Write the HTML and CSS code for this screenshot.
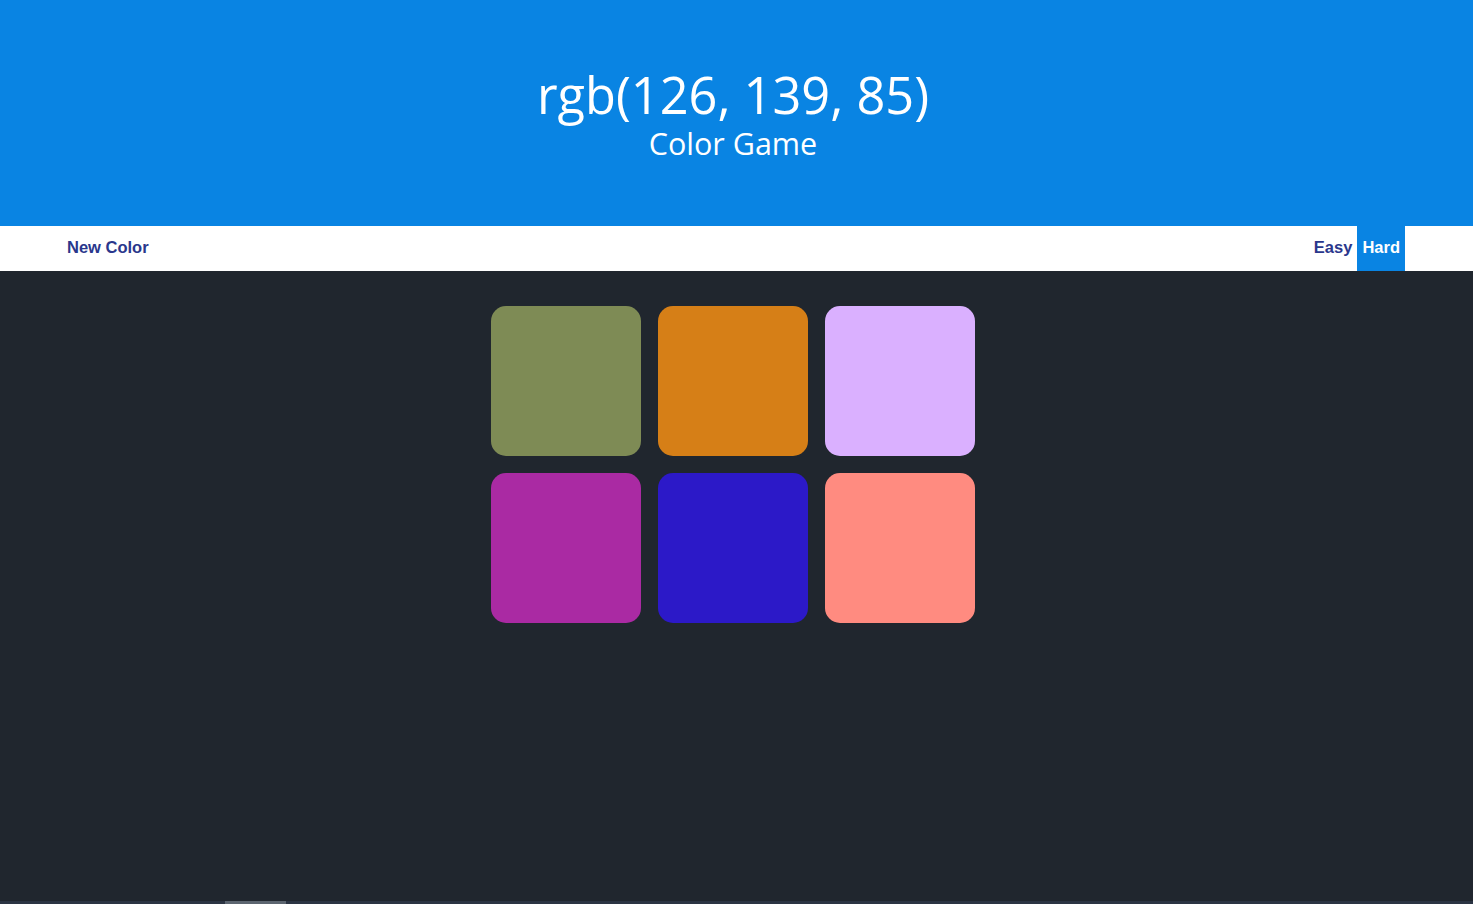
FILE: index.html
```html
<!DOCTYPE html>
<html lang="en">
<head>
<meta charset="utf-8">
<title>Color Game</title>
<link rel="stylesheet" href="styles.css">
</head>
<body>
<div class="page">
  <header class="hero">
    <h1 class="rgb">rgb(126, 139, 85)</h1>
    <p class="subtitle">Color Game</p>
  </header>
  <nav class="bar">
    <button class="btn">New Color</button>
    <div class="modes">
      <button class="btn">Easy</button>
      <button class="btn active">Hard</button>
    </div>
  </nav>
  <main class="board">
    <div class="grid">
      <div class="sq" style="background:#7e8b55"></div>
      <div class="sq" style="background:#d67f17"></div>
      <div class="sq" style="background:#dab0ff"></div>
      <div class="sq" style="background:#aa2aa3"></div>
      <div class="sq" style="background:#2c19c8"></div>
      <div class="sq" style="background:#ff8b80"></div>
    </div>
  </main>
  <div class="track"><div class="thumb"></div></div>
</div>
</body>
</html>
```
FILE: styles.css
```css
html, body {
  margin: 0;
  padding: 0;
  height: 100%;
}
body {
  background: #20262e;
  font-family: "Open Sans", "Noto Sans", sans-serif;
  overflow: hidden;
}
.page {
  display: flex;
  flex-direction: column;
  height: 100vh;
}
.hero {
  height: 226px;
  background: #0984e3;
  color: #fff;
  display: flex;
  flex-direction: column;
  align-items: center;
  justify-content: center;
  padding: 6px 7px 0 0;
  box-sizing: border-box;
}
.rgb {
  margin: 0;
  font-weight: 400;
  font-size: 50.5px;
  line-height: 54px;
}
.subtitle {
  margin: 0;
  font-size: 30.5px;
  line-height: 42px;
}
.bar {
  height: 45px;
  background: #fff;
  display: flex;
  align-items: stretch;
  justify-content: space-between;
  padding: 0 68px 0 62px;
}
.modes {
  display: flex;
  align-items: stretch;
}
.btn {
  border: none;
  background: transparent;
  font-family: "Liberation Sans", Arial, sans-serif;
  font-weight: 700;
  font-size: 16.5px;
  color: #2a378c;
  padding: 0 5px 2px;
  cursor: pointer;
}
.btn.active {
  background: #0984e3;
  color: #fff;
}
.board {
  flex: 1;
  display: flex;
  justify-content: center;
  align-items: flex-start;
  padding: 35px 7px 0 0;
}
.grid {
  display: grid;
  grid-template-columns: repeat(3, 150px);
  gap: 17px;
}
.sq {
  width: 150px;
  height: 150px;
  border-radius: 15px;
}
.track {
  height: 3px;
  background: #2b3443;
  display: flex;
  padding-left: 225px;
}
.thumb {
  width: 61px;
  background: #5c6570;
}
```
